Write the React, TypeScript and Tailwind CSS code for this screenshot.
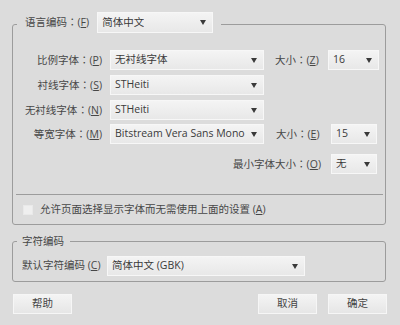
import type { ReactNode } from "react";

function Caret() {
  return (
    <svg width="6" height="5" viewBox="0 0 6 5" aria-hidden="true">
      <path d="M0 0H6L3 5Z" fill="#3a3a3a" />
    </svg>
  );
}

function Select({ text, className }: { text: string; className: string }) {
  return (
    <div
      className={`flex h-[20px] items-center justify-between border border-[#f7f7f7] bg-gradient-to-b from-[#f4f4f4] to-[#e8e8e8] pl-[4px] pr-[6px] text-[#3a3a3a] ${className}`}
    >
      <span className="truncate">{text}</span>
      <Caret />
    </div>
  );
}

// label text with an underlined access key, e.g. 比例字体：(P)
function Label({
  text,
  keyChar,
  colon = true,
  className = "",
}: {
  text: string;
  keyChar: string;
  colon?: boolean;
  className?: string;
}) {
  return (
    <span className={`whitespace-nowrap ${className}`}>
      {text}
      {colon && <span className="font-['Noto_Sans_CJK_TC',sans-serif]">：</span>}(
      <span className="underline">{keyChar}</span>)
    </span>
  );
}

function Row({ children, className = "" }: { children: ReactNode; className?: string }) {
  return <div className={`flex h-[20px] items-center ${className}`}>{children}</div>;
}

function Button({ children }: { children: ReactNode }) {
  return (
    <button className="flex h-[20px] w-[59px] items-center justify-center border border-[#f6f6f6] bg-gradient-to-b from-[#f4f4f4] to-[#e6e6e6] text-[#444]">
      {children}
    </button>
  );
}

export default function App() {
  return (
    <div className="h-[325px] w-[400px] bg-[#dcdcdc] px-[12px] pt-[12px] font-['Open_Sans','Noto_Sans_CJK_SC',sans-serif] text-[10.5px] text-[#474747]">
      {/* Fonts group */}
      <fieldset className="m-0 w-[374px] rounded-[3px] border border-[#9c9c9c] p-0">
        <legend className="ml-[4px] px-[8px] pb-[3px]">
          <div className="flex h-[21px] items-center">
            <Label text="语言编码" keyChar="F" />
            <Select text="简体中文" className="ml-[8px] h-[21px] w-[116px]" />
          </div>
        </legend>

        <div className="ml-[3px] mr-[2px] h-[159px] border-b border-[#9c9c9c] pt-[14px]">
          <Row>
            <Label text="比例字体" keyChar="P" className="w-[86px] text-right" />
            <Select text="无衬线字体" className="ml-[8px] w-[154px]" />
            <Label text="大小" keyChar="Z" className="ml-[11px] w-[53px]" />
            <Select text="16" className="w-[51px]" />
          </Row>
          <Row className="mt-[5px]">
            <Label text="衬线字体" keyChar="S" className="w-[86px] text-right" />
            <Select text="STHeiti" className="ml-[8px] w-[154px]" />
          </Row>
          <Row className="mt-[5px]">
            <Label text="无衬线字体" keyChar="N" className="w-[86px] text-right" />
            <Select text="STHeiti" className="ml-[8px] w-[154px]" />
          </Row>
          <Row className="mt-[4px]">
            <Label text="等宽字体" keyChar="M" className="w-[86px] text-right" />
            <Select text="Bitstream Vera Sans Mono" className="ml-[8px] w-[154px]" />
            <Label text="大小" keyChar="E" className="ml-[12px] w-[55px]" />
            <Select text="15" className="w-[46px]" />
          </Row>
          <Row className="mt-[10px]">
            <Label text="最小字体大小" keyChar="O" className="ml-[200px] w-[115px] pr-[10px] text-right" />
            <Select text="无" className="w-[46px]" />
          </Row>
        </div>

        <div className="flex h-[29px] items-center pl-[10px] pt-[1px]">
          <span className="h-[10px] w-[10px] border border-[#e9e9e9] bg-[#efefef]" />
          <Label text="允许页面选择显示字体而无需使用上面的设置 " keyChar="A" colon={false} className="ml-[7px]" />
        </div>
      </fieldset>

      {/* Encoding group */}
      <fieldset className="m-0 mt-[9px] w-[374px] rounded-[3px] border border-[#9c9c9c] p-0 pb-[5px]">
        <legend className="ml-[4px] pl-[5px] pr-[6px] leading-[14px]">字符编码</legend>
        <Row className="mt-[8px] pl-[9px]">
          <Label text="默认字符编码 " keyChar="C" colon={false} className="w-[85px]" />
          <Select text="简体中文 (GBK)" className="w-[198px]" />
        </Row>
      </fieldset>

      <div className="mt-[12px] flex pl-[1px] pr-[1px]">
        <Button>帮助</Button>
        <div className="ml-auto flex gap-[11px]">
          <Button>取消</Button>
          <Button>确定</Button>
        </div>
      </div>
    </div>
  );
}
